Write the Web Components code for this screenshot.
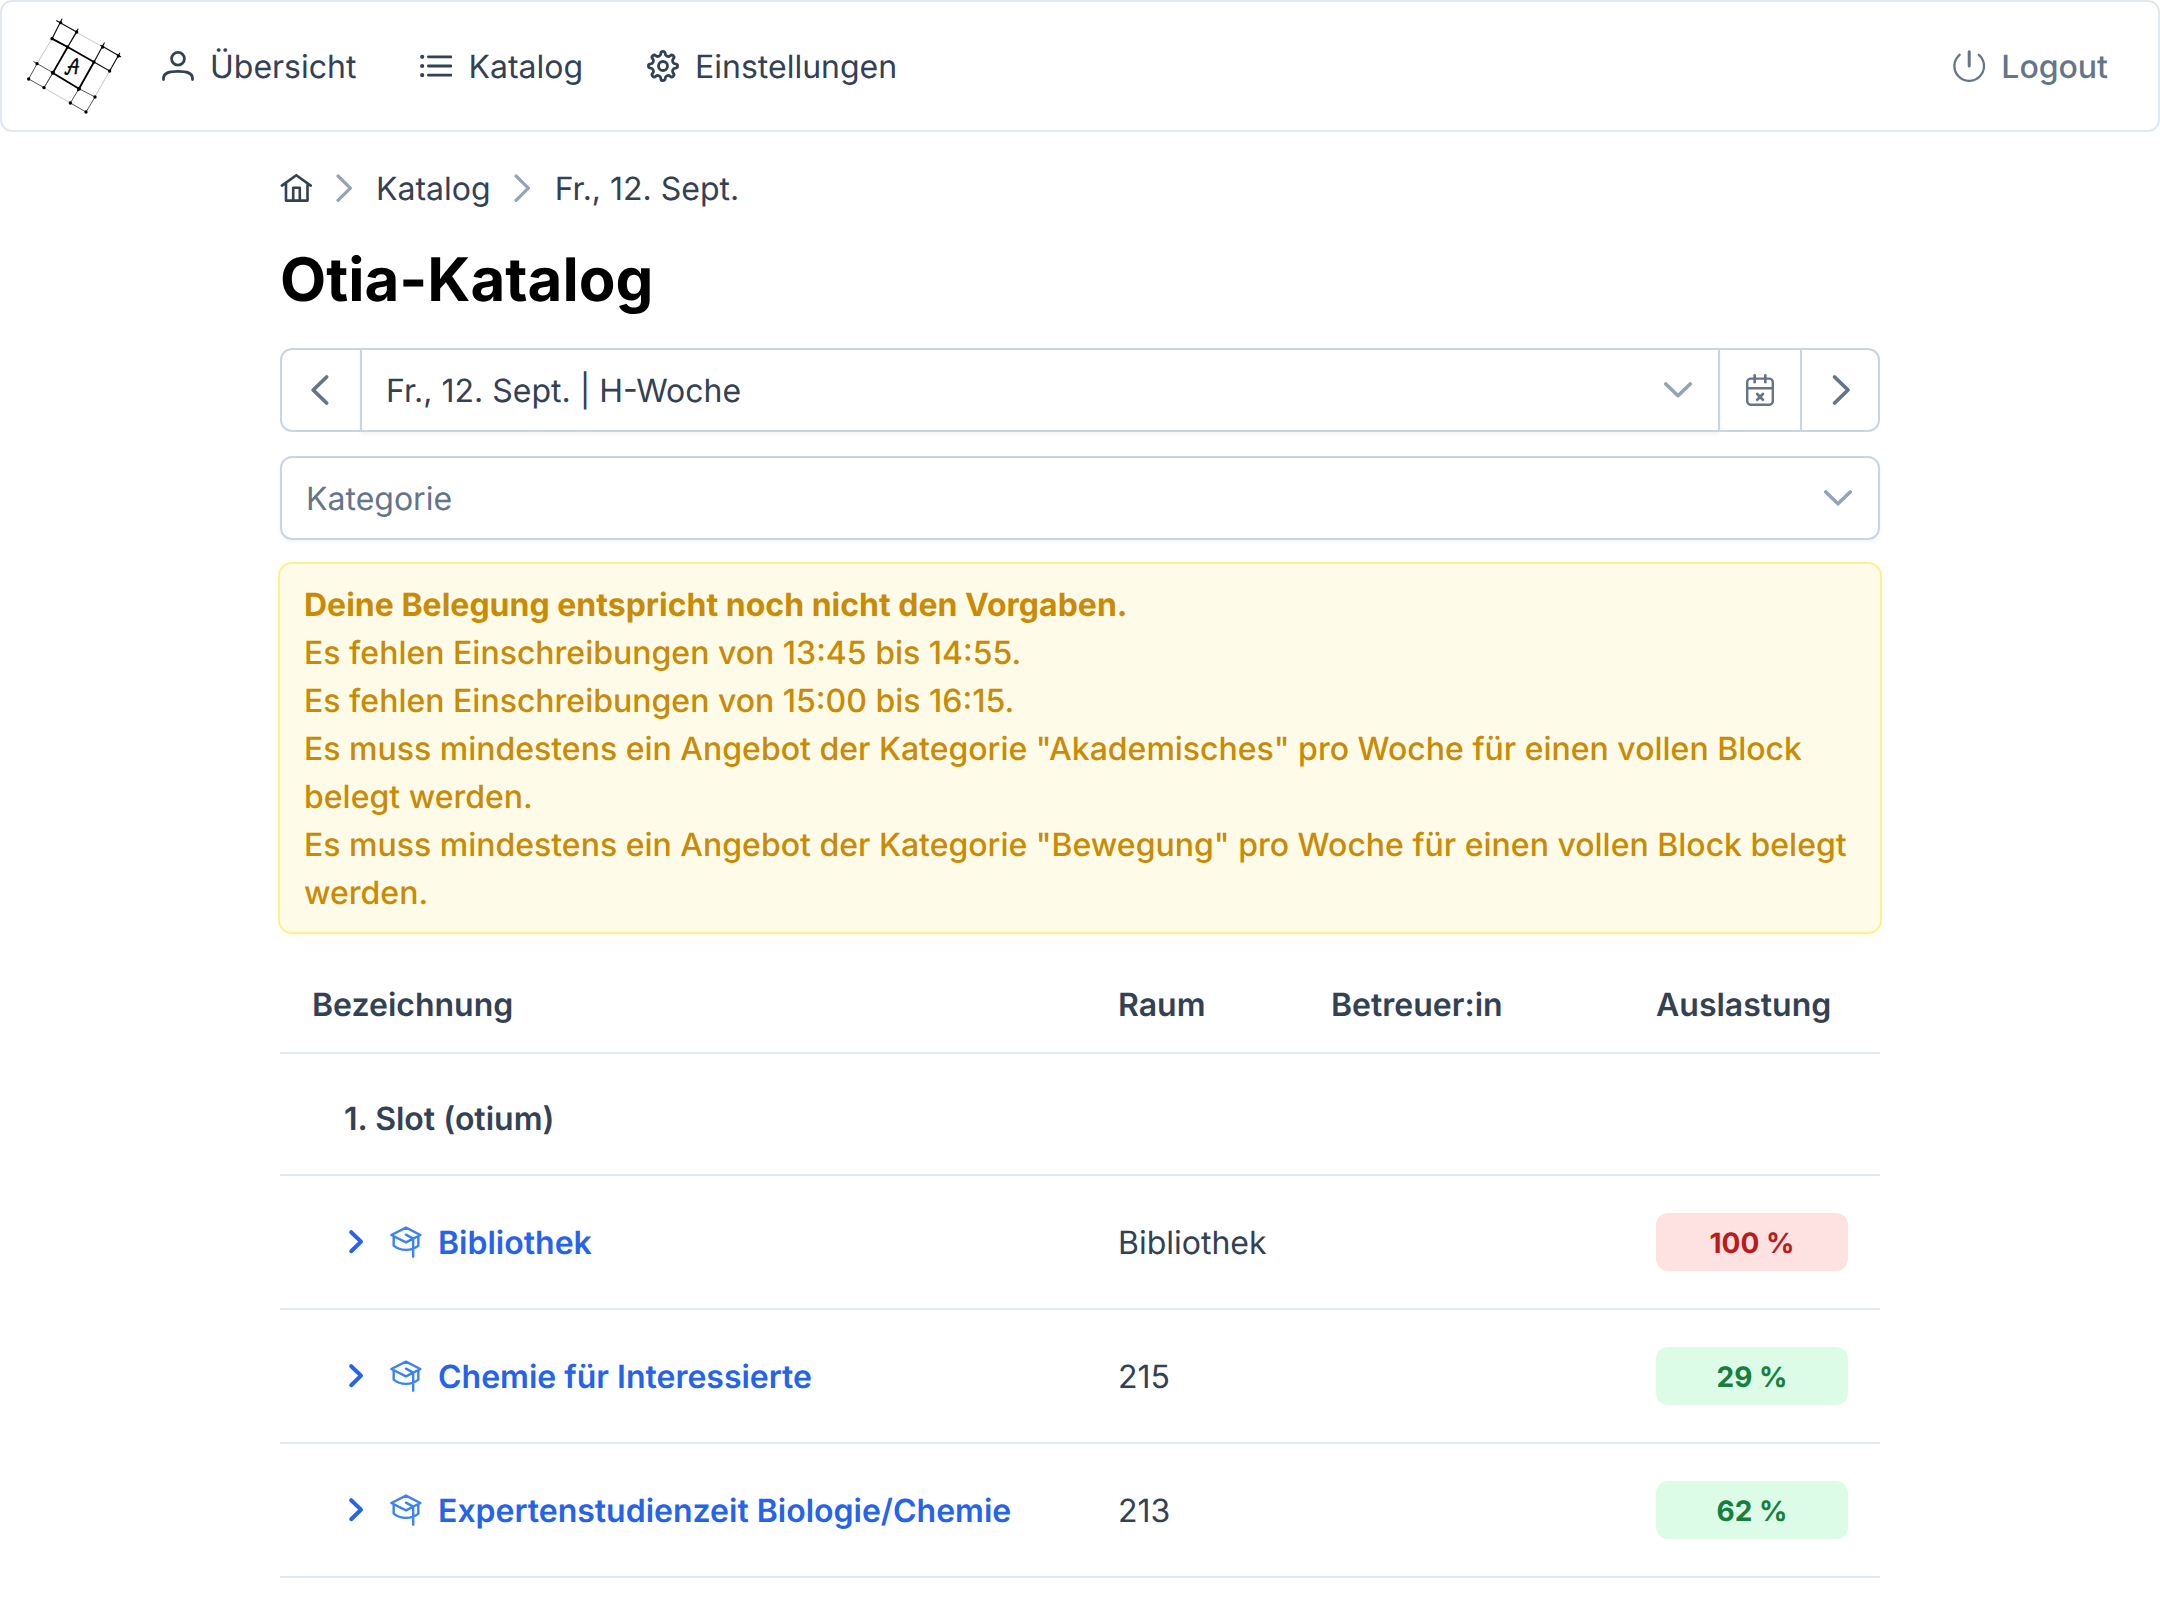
<!DOCTYPE html>
<html lang="de">
<head>
<meta charset="utf-8">
<title>Otia-Katalog</title>
<style>
html,body{margin:0;background:#fff}
body{font:400 32px/48px Inter,"Liberation Sans",sans-serif;color:#334155;height:1620px;overflow:hidden;text-rendering:geometricPrecision}
</style>
</head>
<body>
<otia-app></otia-app>
<script>
const define = (name, html, setup) => {
  const t = document.createElement('template');
  t.innerHTML = html;
  customElements.define(name, class extends HTMLElement {
    connectedCallback() {
      if (this.shadowRoot) return;
      this.attachShadow({mode: 'open'}).append(t.content.cloneNode(true));
      if (setup) setup(this, this.shadowRoot);
    }
  });
};

const gearPath = () => {
  const pt = (x, y, a) => {
    const c = Math.cos(a), s = Math.sin(a);
    return (16 + x * c - y * s).toFixed(2) + ' ' + (16 + x * s + y * c).toFixed(2);
  };
  let d = 'M' + pt(-2.2, -12.4, 0);
  for (let i = 0; i < 8; i++) {
    const a = i * Math.PI / 4;
    d += 'A2.2 2.2 0 0 1 ' + pt(2.2, -12.4, a) + 'A3 3 0 0 0 ' + pt(-2.2, -12.4, a + Math.PI / 4);
  }
  return d + 'Z';
};

/* name: [width, height, viewBox, stroke width, markup] */
const icons = {
  user: [32, 32, '0 0 32 32', 2.8, '<circle cx="16" cy="8.7" r="6.4"/><path d="M1.5 29.6v-.9C1.5 22.8 7 21.4 16 21.4s14.5 1.4 14.5 7.3v.9"/>'],
  list: [32, 32, '0 0 32 32', 2.8, '<path d="M8.4 6.8H31M8.4 16H31M8.4 25.2H31"/><path stroke-width="4.2" d="M2.2 6.8h.01M2.2 16h.01M2.2 25.2h.01"/>'],
  cog: [32, 32, '0 0 32 32', 2.8, '<circle cx="16" cy="16" r="4.5"/><path d="' + gearPath() + '"/>'],
  power: [32, 32, '0 0 32 32', 2.3, '<path d="M6.6 4.8A14.8 14.8 0 1 0 25.8 4.8"/><path stroke-width="3" d="M16.2 1.8V16"/>'],
  home: [32, 32, '0 0 32 32', 2.6, '<path d="M1.9 13.6L16.3 3.2L30.7 13.6M6 11.5V28.6H27.5V11.5M13.2 28V15.7H19.8V28"/>'],
  crumb: [16, 32, '0 0 16 32', 3.2, '<path d="M2 4L14.4 16.1L2 28.3"/>'],
  left: [32, 32, '0 0 32 32', 3.8, '<path d="M21.6 3L8.200 16L21.6 29"/>'],
  right: [32, 32, '0 0 32 32', 3.8, '<path d="M10.6 3L24 16L10.6 29"/>'],
  down: [28, 28, '0 0 28 28', 3.6, '<path d="M1.8 8L14 19.8L26.2 8"/>'],
  calendar: [32, 32, '0 0 32 32', 2.4, '<rect x="3.2" y="4.6" width="25.6" height="26.2" rx="3.6"/><path d="M3.2 14.2H28.8"/><path stroke-width="2.7" d="M10.7 1.4V8.2M21.3 1.4V8.2M13.2 20L18.9 25.7M18.9 20L13.2 25.7"/>'],
  toggle: [28, 28, '0 0 28 28', 4, '<path d="M8.2 4.2L18 13.6L8.2 23.2"/>'],
  cap: [32, 32, '202 78 96 96', 7.2, '<path d="M206 105L250 83L293 105L250 127ZM213 110V137Q228 149.500 250 149.500Q272 149.500 287 137V110M250 104L271.500 116V170"/>'],
};

define('ui-icon', `
<style>:host{display:block;flex:none;line-height:0}svg{display:block;fill:none;stroke:currentColor;stroke-linecap:round;stroke-linejoin:round}</style>
<svg></svg>`, (el, root) => {
  const [w, h, box, sw, body] = icons[el.getAttribute('name')];
  const svg = root.querySelector('svg');
  svg.setAttribute('width', w);
  svg.setAttribute('height', h);
  svg.setAttribute('viewBox', box);
  svg.setAttribute('stroke-width', sw);
  svg.innerHTML = body;
});

define('app-logo', `
<style>:host{display:block;flex:none;width:100px;height:100px}svg{display:block}text{font-family:"DejaVu Math TeX Gyre","DejaVu Serif",serif}</style>
<svg width="100" height="100" viewBox="75 48 300 300" fill="none" stroke="#000" stroke-linecap="round">
  <g stroke="#bbb" stroke-width="2.5"><path d="M229 96L308 141M329 213L285 290M211 309L132 263M111 191L156 116"/></g>
  <g stroke="#555" stroke-width="3"><path d="M101 185L159 218L132 263L86 237L111 191M237 266L285 291L258 336L211 309L237 266M159 218L132 263"/></g>
  <g stroke="#111" stroke-width="3.5"><path d="M170 62L230 96L203 141L156 116L186 57M234 87L203 141M313 129L282 186L329 213L359 160M302 136L362 170"/></g>
  <g stroke-width="5.5"><path d="M203 141L282 186L234 271M282 186L237 266L155 217M203 141L159 218M156 116L203 141"/></g>
  <g fill="#000" stroke="none"><circle cx="182" cy="68" r="5"/><circle cx="230" cy="96" r="5"/><circle cx="156" cy="116" r="5"/><circle cx="203" cy="141" r="5"/><circle cx="308" cy="141" r="5"/><circle cx="355" cy="168" r="5"/><circle cx="282" cy="186" r="5"/><circle cx="329" cy="213" r="5"/><circle cx="111" cy="191" r="5"/><circle cx="159" cy="218" r="6"/><circle cx="86" cy="237" r="5"/><circle cx="132" cy="263" r="5"/><circle cx="237" cy="266" r="6"/><circle cx="285" cy="291" r="5"/><circle cx="211" cy="309" r="5"/><circle cx="258" cy="336" r="5"/></g>
  <text transform="translate(215 223) scale(.85 1.1)" font-size="56" fill="#000" stroke="#000" stroke-width="1.8" text-anchor="middle">𝒜</text>
</svg>`);

/* Builds its icon from the icon attribute. */
define('icon-link', `
<style>:host{display:flex;align-items:center;gap:16px;white-space:nowrap}span{padding-top:2px}</style>
<div id="i"></div><span><slot></slot></span>`, (el, root) => {
  root.getElementById('i').innerHTML = '<ui-icon name="' + el.getAttribute('icon') + '"></ui-icon>';
});

define('app-header', `
<style>
:host{display:flex;align-items:center;box-sizing:border-box;height:132px;border:2px solid #e2e8f0;border-radius:12px;padding:0 50px 0 23px}
nav{display:flex;gap:64px;margin-left:37px}
.out{margin-left:auto;color:#64748b;font-weight:500}
</style>
<app-logo></app-logo>
<nav><icon-link icon="user">Übersicht</icon-link><icon-link icon="list">Katalog</icon-link><icon-link icon="cog">Einstellungen</icon-link></nav>
<icon-link class="out" icon="power">Logout</icon-link>`);

define('bread-crumb', `
<style>:host{display:flex;align-items:center;gap:24px;height:48px}.s{color:#94a3b8}.t{margin-left:-1px;margin-right:1px}span{padding-top:2px}</style>
<ui-icon name="home"></ui-icon><ui-icon class="s" name="crumb"></ui-icon><span>Katalog</span><ui-icon class="s t" name="crumb"></ui-icon><span>Fr., 12. Sept.</span>`);

define('select-box', `
<style>
:host{display:flex;flex:1;align-items:center;justify-content:space-between;box-sizing:border-box;height:84px;padding:0 26px 0 24px;border:2px solid #cbd5e1;border-radius:12px;box-shadow:0 2px 4px rgba(18,18,23,.05)}
:host([placeholder]){color:#64748b}
ui-icon{color:#94a3b8}
span{padding-top:2px}
</style>
<span><slot></slot></span><ui-icon name="down"></ui-icon>`);

define('date-picker-bar', `
<style>
:host{display:flex;height:84px;color:#64748b}
.b{display:flex;align-items:center;justify-content:center;box-sizing:border-box;border:2px solid #cbd5e1;width:80px}
.l{border-right:0;border-radius:12px 0 0 12px}
.c{border-left:0;width:82px}
.r{border-left:0;border-radius:0 12px 12px 0;width:78px}
select-box{border-radius:0;color:#334155}
</style>
<div class="b l"><ui-icon name="left"></ui-icon></div>
<select-box>Fr., 12. Sept. | H-Woche</select-box>
<div class="b c"><ui-icon name="calendar"></ui-icon></div>
<div class="b r"><ui-icon name="right"></ui-icon></div>`);

define('warn-message', `
<style>
:host{display:block;padding:17px 24px 15px;border-radius:12px;background:#fefce8f2;outline:2px solid #fef08a;color:#ca8a04;font-weight:500;box-shadow:0 8px 16px rgba(234,179,8,.04)}
b{font-weight:700}p{margin:0}
</style>
<p><b>Deine Belegung entspricht noch nicht den Vorgaben.</b></p>
<p>Es fehlen Einschreibungen von 13:45 bis 14:55.</p>
<p>Es fehlen Einschreibungen von 15:00 bis 16:15.</p>
<p>Es muss mindestens ein Angebot der Kategorie "Akademisches" pro Woche für einen vollen Block belegt werden.</p>
<p>Es muss mindestens ein Angebot der Kategorie "Bewegung" pro Woche für einen vollen Block belegt werden.</p>`);

define('load-tag', `
<style>
:host{display:flex;align-items:center;justify-content:center;box-sizing:border-box;height:58px;padding-top:1px;border-radius:12px;font-size:28px;font-weight:700;background:#dcfce7;color:#15803d}
:host([full]){background:#fee2e2;color:#b91c1c}
</style><slot></slot>`);

const rowStyle = `
:host{display:grid;grid-template-columns:806px 213px 325px 256px;align-items:center;box-sizing:border-box;border-bottom:2px solid #e2e8f0}
.cell{padding:0 32px}
.text{padding-top:2px}`;

define('table-head', `
<style>${rowStyle}:host{height:98px;font-weight:600}</style>
<div class="cell text">Bezeichnung</div><div class="cell text">Raum</div><div class="cell text">Betreuer:in</div><div class="cell text">Auslastung</div>`);

define('slot-row', `
<style>:host{display:block;box-sizing:border-box;height:122px;padding:41px 64px 0;border-bottom:2px solid #e2e8f0;font-weight:600}</style>
<slot></slot>`);

define('offer-row', `
<style>
${rowStyle}
:host{height:134px}
.name{display:flex;align-items:center;padding-left:63px;color:#2563eb;font-weight:600;white-space:nowrap}
.cap{color:#3b82f6;margin:0 16px 0 19px}
</style>
<div class="name"><ui-icon name="toggle"></ui-icon><ui-icon class="cap" name="cap"></ui-icon><span class="text"><slot></slot></span></div>
<div class="cell text"><slot name="room"></slot></div><div class="cell"></div><div class="cell"><slot name="load"></slot></div>`);

define('otia-app', `
<style>
:host{display:block}
main{display:flex;flex-direction:column;width:1600px;margin:32px auto 0}
h1{margin:32px 0;font-size:60px;line-height:72px;font-weight:700;color:#000}
date-picker-bar{margin-bottom:24px}
select-box{flex:none}
warn-message{margin:24px 0}
</style>
<app-header></app-header>
<main>
<bread-crumb></bread-crumb>
<h1>Otia-Katalog</h1>
<date-picker-bar></date-picker-bar>
<select-box placeholder>Kategorie</select-box>
<warn-message></warn-message>
<table-head></table-head>
<slot-row>1. Slot (otium)</slot-row>
<offer-row>Bibliothek<span slot="room">Bibliothek</span><load-tag slot="load" full>100 %</load-tag></offer-row>
<offer-row>Chemie für Interessierte<span slot="room">215</span><load-tag slot="load">29 %</load-tag></offer-row>
<offer-row>Expertenstudienzeit Biologie/Chemie<span slot="room">213</span><load-tag slot="load">62 %</load-tag></offer-row>
</main>`);
</script>
</body>
</html>
